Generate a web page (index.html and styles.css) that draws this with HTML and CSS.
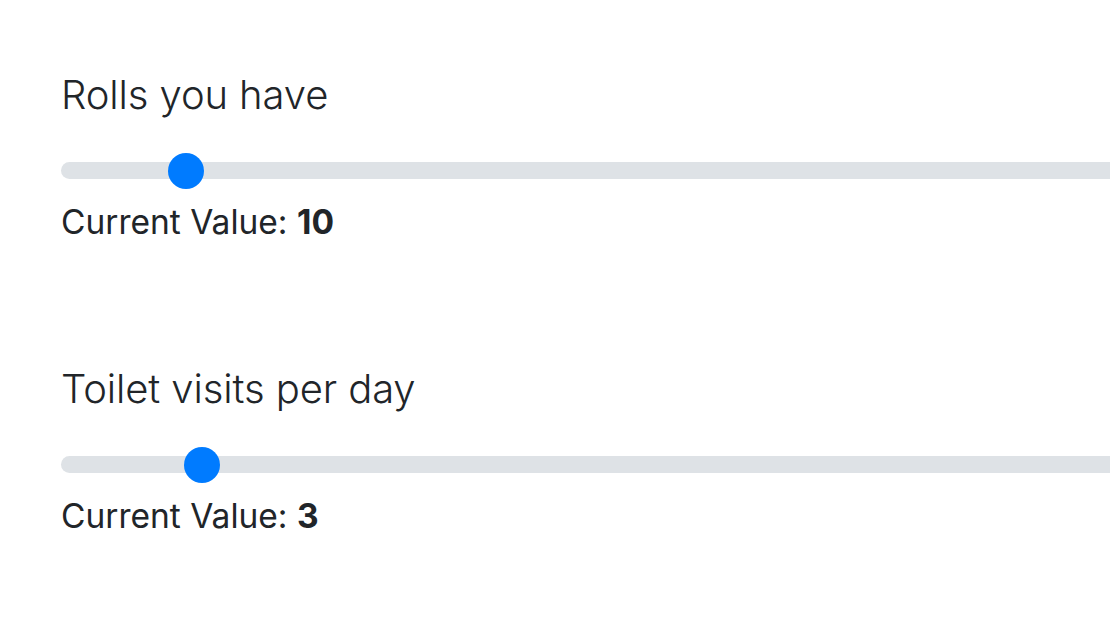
FILE: index.html
```html
<!DOCTYPE html>
<html>
<head>
<meta charset="utf-8">
<link rel="stylesheet" href="styles.css">
</head>
<body>
<div class="page">
  <section class="group">
    <div class="label">Rolls you have</div>
    <div class="slider">
      <div class="track"></div>
      <div class="thumb" style="left: 107px"></div>
    </div>
    <div class="value">Current Value: <b>10</b></div>
  </section>
  <section class="group">
    <div class="label">Toilet visits per day</div>
    <div class="slider">
      <div class="track"></div>
      <div class="thumb" style="left: 123px"></div>
    </div>
    <div class="value">Current Value: <b>3</b></div>
  </section>
</div>
</body>
</html>
```
FILE: styles.css
```css
html, body {
  margin: 0;
  padding: 0;
  background: #fff;
  overflow: hidden;
}
.page {
  width: 1110px;
  height: 624px;
  padding: 71px 0 0 61px;
  box-sizing: border-box;
  display: flex;
  flex-direction: column;
  gap: 124px;
  overflow: hidden;
  font-family: Inter, "Liberation Sans", sans-serif;
  color: #212529;
}
.group {
  display: flex;
  flex-direction: column;
}
.label {
  font-size: 40px;
  line-height: 48px;
  font-weight: 300;
  letter-spacing: -0.1px;
}
.slider {
  position: relative;
  height: 36px;
  margin-top: 34px;
  margin-right: -30px;
}
.track {
  position: absolute;
  left: 0;
  right: 0;
  top: 9px;
  height: 17px;
  border-radius: 9px;
  background: #dee2e6;
}
.thumb {
  position: absolute;
  top: 0;
  width: 36px;
  height: 36px;
  border-radius: 50%;
  background: #007bff;
}
.value {
  margin-top: 14px;
  font-size: 33.5px;
  line-height: 38px;
  font-weight: 400;
}
.value b {
  font-weight: 700;
}
```
